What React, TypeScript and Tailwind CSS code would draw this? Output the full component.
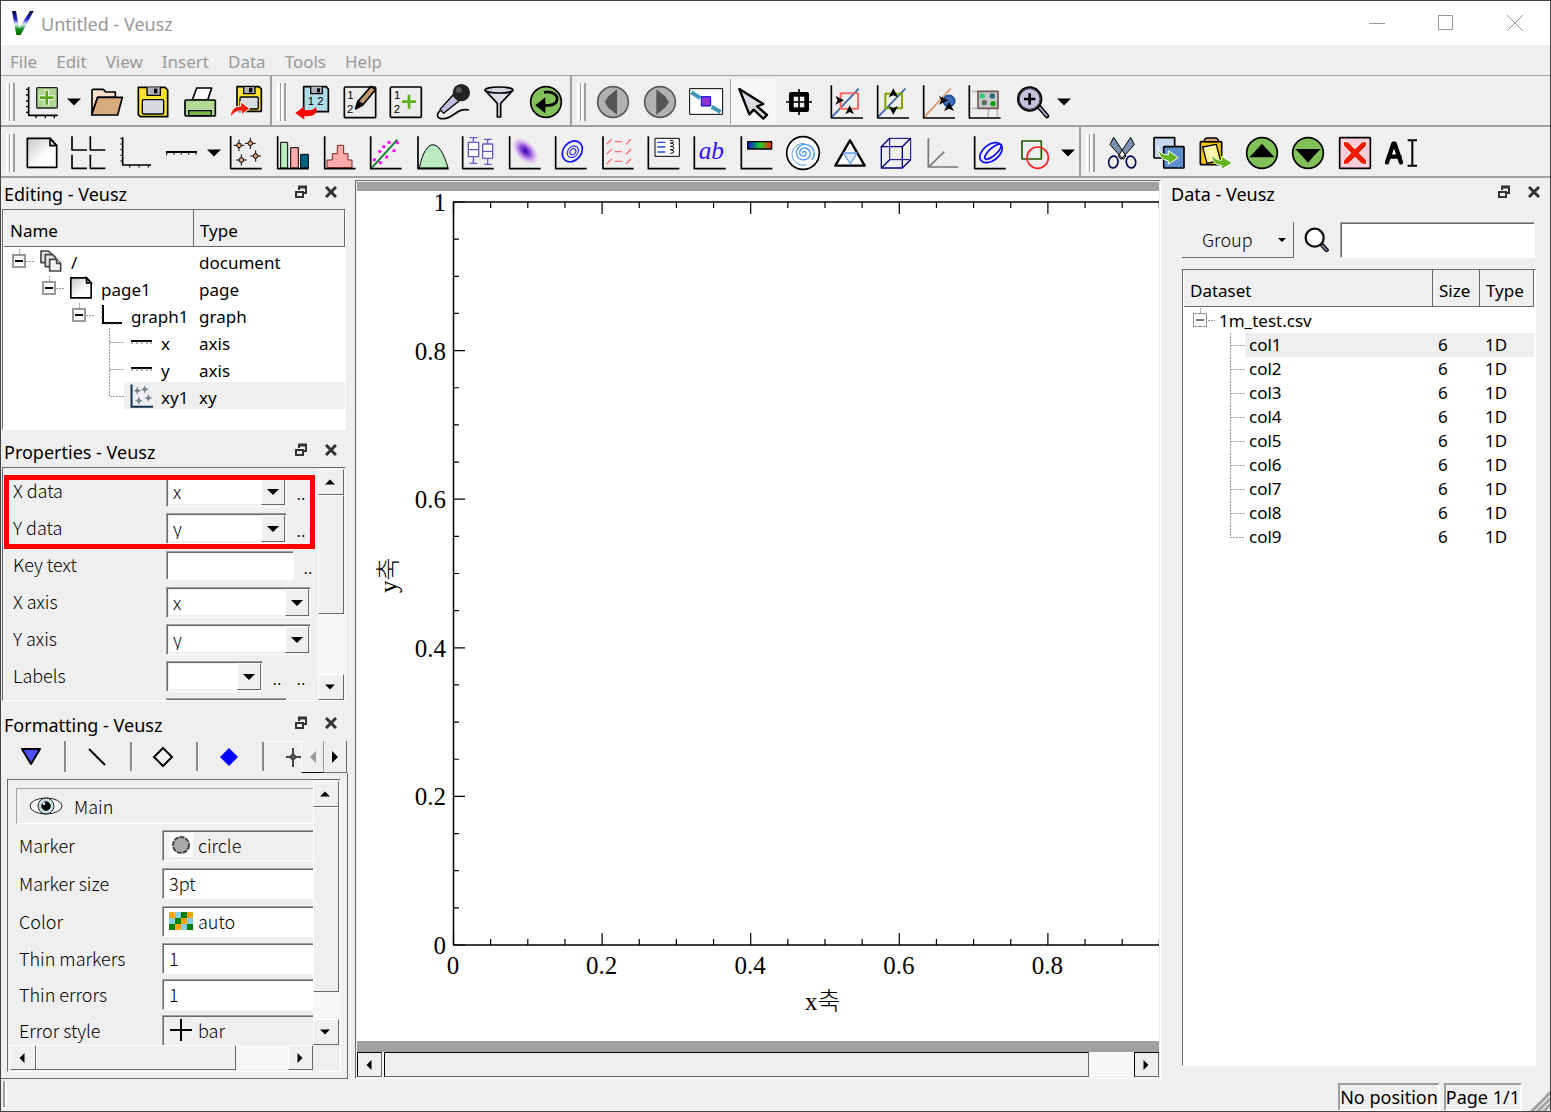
import React from 'react';

const ui = "font-['Noto_Sans','Noto_Sans_CJK_KR',sans-serif]";
const thin = "font-['Noto_Sans_CJK_KR',sans-serif] font-light";
const panel = 'border border-t-[#696969] border-l-[#696969] border-r-white border-b-white';
const field = 'border border-t-[#a0a0a0] border-l-[#a0a0a0] border-r-white border-b-white shadow-[inset_1px_1px_0_#696969]';
const raised = 'border border-t-white border-l-white border-r-[#696969] border-b-[#696969] bg-[#efefef]';
const trough = 'bg-[repeating-conic-gradient(#ffffff_0_25%,#efefef_0_50%)] bg-[length:2px_2px]';

/* ---------- toolbar icons ---------- */

function Icon({ box, children }: { box: string; children: React.ReactNode }) {
  return (
    <svg width="36" height="36" viewBox={`${box} 108 108`} fill="none" stroke="#000" strokeWidth="5" strokeLinejoin="round" aria-hidden="true">
      {children}
    </svg>
  );
}

function Digits({ x, y, children }: { x: number; y: number; children: string }) {
  return (
    <text x={x} y={y} fontSize="34" fill="#000" stroke="none" fontFamily="Liberation Sans, sans-serif">{children}</text>
  );
}

function Star({ x, y, fill = '#e8a078' }: { x: number; y: number; fill?: string }) {
  return (
    <g strokeWidth="3">
      <path d={`M${x} ${y - 17}v34M${x - 16} ${y}h32`} />
      <circle cx={x} cy={y} r="7" fill={fill} />
    </g>
  );
}

const fileIcons = {
  newGraph: (
    <Icon box="72 252">
      <path d="M86 261V346H173" />
      <path d="M78 268h8M78 285h8M78 303h8M78 320h8M78 337h8M108 346v9M136 346v9M163 346v9" strokeWidth="4" />
      <rect x="110" y="263" width="62" height="61" rx="3" fill="#b2d693" stroke="#222" strokeWidth="4" />
      <path d="M140 270v46M117 293h46" stroke="#fff" strokeWidth="13" />
      <path d="M140 272v42M119 293h42" stroke="#5ba91a" strokeWidth="8" />
    </Icon>
  ),
  open: (
    <Icon box="264 252">
      <path d="M273 345V272Q273 268 277 268H307L314 276H343V292H290L273 340Z" fill="#f5dfca" />
      <path d="M290 292H364L350 345H272Z" fill="#d8ab7c" />
    </Icon>
  ),
  save: (
    <Icon box="405 252">
      <path d="M415 262H495L503 270V350H421L415 344Z" fill="#fde330" />
      <path d="M441 262V286H481V262" fill="#b0b3b8" strokeWidth="4" />
      <rect x="462" y="266" width="10" height="14" fill="#000" stroke="none" />
      <rect x="427" y="299" width="64" height="43" rx="4" fill="#d5dbe0" strokeWidth="4" />
    </Icon>
  ),
  print: (
    <Icon box="543 252">
      <path d="M587 264H632L620 300H574Z" fill="#fff" />
      <rect x="552" y="300" width="91" height="48" rx="3" fill="#b4d896" />
      <rect x="563" y="332" width="68" height="15" fill="#7ab648" strokeWidth="4" />
    </Icon>
  ),
  export: (
    <Icon box="684 252">
      <path d="M711 260H777L784 267V334H716L711 329Z" fill="#fde330" />
      <path d="M731 261V281H765V261" fill="#b0b3b8" strokeWidth="4" />
      <rect x="747" y="263" width="10" height="14" fill="#000" stroke="none" />
      <rect x="720" y="291" width="55" height="36" rx="4" fill="#d5dbe0" strokeWidth="4" />
      <path d="M690 354Q692 318 722 318V305L750 326L724 344V333Q705 331 690 354Z" fill="#f02010" stroke="#fff" strokeWidth="3" />
    </Icon>
  ),
};

const dataIcons = [
  ['Import data',
    <Icon box="75 24">
      <path d="M101 32H168L175 39V107H101Z" fill="#b0dcea" />
      <path d="M122 32V53H157V32" fill="#b0b3b8" strokeWidth="4" />
      <rect x="141" y="37" width="9" height="12" fill="#000" stroke="none" />
      <Digits x={113} y={87}>1</Digits>
      <Digits x={142} y={87}>2</Digits>
      <path d="M76 111L103 91V102Q130 106 138 92L140 106Q134 124 103 120V131Z" fill="#f00" stroke="none" />
    </Icon>],
  ['Edit data',
    <Icon box="216 24">
      <rect x="223" y="33" width="94" height="92" rx="3" fill="#ececec" />
      <Digits x={232} y={70}>1</Digits>
      <Digits x={231} y={112}>2</Digits>
      <path d="M257 98L264 76L303 31L316 41L279 86Z" fill="#c19a6b" />
      <path d="M257 98L264 76L279 86Z" fill="#000" />
    </Icon>],
  ['Create dataset',
    <Icon box="354 24">
      <rect x="361" y="33" width="93" height="91" rx="3" fill="#ececec" />
      <Digits x={372} y={70}>1</Digits>
      <Digits x={371} y={112}>2</Digits>
      <path d="M417 56v42M396 77h42" stroke="#5cb01c" strokeWidth="8" />
    </Icon>],
  ['Capture data',
    <Icon box="498 24">
      <path d="M552 57L570 75L524 112L513 100Z" fill="#c2bee0" strokeWidth="4" />
      <circle cx="577" cy="50" r="26" fill="#222" stroke="none" />
      <circle cx="570" cy="42" r="9" fill="#555" stroke="none" />
      <path d="M514 104C500 115 503 129 524 128C556 126 564 94 600 102" />
    </Icon>],
  ['Filter data',
    <Icon box="633 24">
      <path d="M646 44L682 82V123H692V82L728 44Z" fill="#dcdee4" />
      <ellipse cx="687" cy="42" rx="42" ry="9" fill="#d0d4dc" />
    </Icon>],
  ['Reload linked data',
    <Icon box="774 24">
      <circle cx="828" cy="78" r="46" fill="#82c05a" />
      <path d="M822 49C846 44 864 57 861 72C858 87 842 89 822 89" strokeWidth="8" />
      <path d="M796 88L826 64V112Z" fill="#000" stroke="none" />
    </Icon>],
] as [string, React.ReactNode][];

const viewIcons = [
  ['Previous page',
    <Icon box="75 24">
      <circle cx="129" cy="78" r="46" fill="#b1b1b1" stroke="#5a5a5a" />
      <path d="M104 78L115 61L141 40V116L115 95Z" fill="#555" stroke="none" />
    </Icon>],
  ['Next page',
    <Icon box="216 24">
      <circle cx="270" cy="78" r="46" fill="#b1b1b1" stroke="#5a5a5a" />
      <path d="M297 78L285 61L259 40V116L285 95Z" fill="#555" stroke="none" />
    </Icon>],
  ['Full screen',
    <Icon box="354 24">
      <rect x="359" y="38" width="99" height="77" fill="#fff" strokeWidth="3" />
      <path d="M364 49L391 66M425 92L452 108" stroke="#3a98b2" strokeWidth="12" />
      <rect x="394" y="62" width="28" height="28" fill="#9030d8" stroke="#0000e0" strokeWidth="3" />
    </Icon>],
  ['Select items',
    <Icon box="498 24">
      <path d="M511 39L583 84L564 91L594 117L583 128L554 101L541 115Z" fill="#dcdce0" strokeWidth="7" />
    </Icon>],
  ['Read data points',
    <Icon box="633 24">
      <rect x="657" y="48" width="60" height="60" rx="6" fill="#000" stroke="none" />
      <rect x="671" y="62" width="32" height="32" fill="#efefef" stroke="none" />
      <path d="M687 39v78M648 78h78" />
    </Icon>],
  ['Zoom axes',
    <Icon box="81 24">
      <path d="M94 122L173 38" stroke="#3465a4" />
      <rect x="119" y="52" width="52" height="46" stroke="#ff6a6a" strokeWidth="6" />
      <path d="M91 28V126H186" />
      <path d="M103 60L129 73L103 86L110 73ZM133 115L146 88L159 115L146 108Z" fill="#000" stroke="none" />
    </Icon>],
  ['Recenter axes',
    <Icon box="219 24">
      <path d="M232 122L313 38" stroke="#3465a4" />
      <rect x="253" y="53" width="50" height="44" stroke="#80a800" strokeWidth="6" />
      <path d="M230 28V126H324" />
      <path d="M263 64L277 37L291 64L277 58ZM263 90L277 116L291 90L277 96Z" fill="#000" stroke="none" />
    </Icon>],
  ['Reset axes',
    <Icon box="363 24">
      <path d="M374 122L452 38" stroke="#dd9468" />
      <circle cx="447" cy="75" r="17" fill="#3a6cb5" stroke="#1f4e98" />
      <path d="M371 28V126H465" />
      <path d="M417 60L444 73L417 86L424 73ZM432 105L447 78L462 105L447 98Z" fill="#000" stroke="none" />
    </Icon>],
  ['Zoom page',
    <Icon box="501 24">
      <path d="M515 46H535M515 97H535M565 98V124M592 98V124" stroke="#bbb" />
      <rect x="534" y="46" width="60" height="51" fill="#c8c8c8" stroke="#6f5558" />
      <g stroke="none">
        <circle cx="547" cy="60" r="8" fill="#2ecc71" />
        <circle cx="577" cy="60" r="8" fill="#2a6a7a" />
        <circle cx="553" cy="80" r="8" fill="#5a6a55" />
        <circle cx="579" cy="83" r="8" fill="#10a010" />
      </g>
      <path d="M508 28V126H602" />
    </Icon>],
  ['Zoom',
    <Icon box="639 24">
      <path d="M714 92L738 120" strokeWidth="14" strokeLinecap="round" />
      <path d="M716 95L737 119" stroke="#a8a4cc" strokeWidth="6" strokeLinecap="round" />
      <circle cx="686" cy="69" r="34" fill="#c5c2de" strokeWidth="8" />
      <circle cx="686" cy="69" r="32" stroke="#77748c" strokeWidth="2" />
      <path d="M686 52v34M669 69h34" strokeWidth="8" />
    </Icon>],
] as [string, React.ReactNode][];

function PageShape() {
  return (
    <>
      <defs>
        <linearGradient id="paper" x1="0" y1="0" x2="1" y2="1">
          <stop offset="0" stopColor="#c4c4c4" />
          <stop offset="0.6" stopColor="#fff" />
        </linearGradient>
      </defs>
      <path d="M82 415H150L170 437V502H82Z" fill="url(#paper)" />
      <path d="M150 415V437H170Z" fill="#ddd" />
    </>
  );
}

const insertIcons = [
  ['Page', <Icon box="72 405"><PageShape /></Icon>],
  ['Grid',
    <Icon box="210 405">
      <path d="M216 409V450H261M271 409V450H316M216 464V505H261M271 464V505H316" />
    </Icon>],
  ['Graph',
    <Icon box="351 405">
      <path d="M368 412V495H453" />
      <path d="M361 415h7M361 432h7M361 449h7M361 466h7M361 483h7M389 495v8M417 495v8M445 495v8" strokeWidth="3" />
    </Icon>],
  ['Axis',
    <Icon box="489 405">
      <path d="M498 456H591" strokeWidth="6" />
      <path d="M500 456v10M522 456v8M544 456v8M566 456v8M588 456v8" strokeWidth="3" />
    </Icon>],
] as [string, React.ReactNode][];

const plotIcons = [
  ['Plot points',
    <Icon box="684 405">
      <Star x={717} y={436} /><Star x={751} y={430} /><Star x={724} y={480} /><Star x={767} y={468} />
      <path d="M692 408V506H785" />
    </Icon>],
  ['Plot bar charts',
    <Icon box="12 177">
      <g strokeWidth="3">
        <rect x="29" y="199" width="21" height="77" fill="#bbebc0" />
        <rect x="59" y="215" width="23" height="61" fill="#ffaaaa" />
        <rect x="89" y="235" width="23" height="41" fill="#006080" />
      </g>
      <path d="M20 181V278H113" />
    </Icon>],
  ['Plot histogram',
    <Icon box="150 177">
      <path d="M168 275V252H184V233H199V208H218V233H231V252H243V275Z" fill="#ffaaaa" stroke="#7a2020" strokeWidth="3" />
      <path d="M161 181V278H254" />
    </Icon>],
  ['Fit function',
    <Icon box="288 177">
      <path d="M303 275L379 191" stroke="#188038" strokeWidth="6" />
      <g fill="#f0f" stroke="none">
        <circle cx="310" cy="251" r="5" /><circle cx="328" cy="260" r="5" /><circle cx="326" cy="226" r="5" />
        <circle cx="338" cy="212" r="5" /><circle cx="354" cy="199" r="5" /><circle cx="347" cy="243" r="5" />
        <circle cx="369" cy="224" r="5" /><circle cx="379" cy="200" r="5" />
      </g>
      <path d="M299 181V278H392" />
    </Icon>],
  ['Plot function',
    <Icon box="429 177">
      <path d="M445 276C464 183 506 183 531 276Z" fill="#bbebc0" strokeWidth="3" />
      <path d="M441 181V278H533" />
    </Icon>],
  ['Plot box plots',
    <Icon box="570 177">
      <g stroke="#6a5acd" strokeWidth="4">
        <rect x="595" y="199" width="31" height="43" fill="#fff" />
        <rect x="638" y="204" width="30" height="43" fill="#fff" />
        <path d="M595 221h31M638 226h30M610 199V185M599 185h23M610 242v20M599 262h23M653 204V190M642 190h23M653 247v18M642 265h23" />
      </g>
      <path d="M578 181V278H671" />
    </Icon>],
  ['Plot image',
    <Icon box="711 177">
      <defs>
        <radialGradient id="blob">
          <stop offset="0" stopColor="#3000b0" />
          <stop offset="0.45" stopColor="#9a5ae0" />
          <stop offset="1" stopColor="#e8b8f4" stopOpacity="0.3" />
        </radialGradient>
      </defs>
      <ellipse cx="766" cy="225" rx="46" ry="27" transform="rotate(46 766 225)" fill="url(#blob)" stroke="none" />
      <path d="M719 181V278H812" />
    </Icon>],
  ['Plot contours',
    <Icon box="849 177">
      <g stroke="#1010ff" strokeWidth="5" transform="rotate(-50 907 226)">
        <ellipse cx="907" cy="226" rx="34" ry="27" />
        <ellipse cx="907" cy="228" rx="19" ry="15" strokeWidth="3" />
        <ellipse cx="907" cy="228" rx="10" ry="8" strokeWidth="3" />
      </g>
      <path d="M857 181V278H950" />
    </Icon>],
  ['Plot vector field',
    <Icon box="987 177">
      <g stroke="#ff7070" strokeWidth="4">
        <path d="M1010 205L1025 190M1034 197H1056M1068 205L1083 190" />
        <path d="M1010 235L1025 220M1034 227H1056M1068 235L1083 220" />
        <path d="M1010 264L1025 249M1034 256H1056M1068 264L1083 249" />
      </g>
      <path d="M999 181V278H1091" />
    </Icon>],
  ['Key',
    <Icon box="228 177">
      <rect x="255" y="187" width="73" height="54" fill="#fff" strokeWidth="3" />
      <path d="M262 199h24M262 213h24M262 228h24" stroke="#1a4fe0" strokeWidth="4" />
      <path d="M300 194q10-4 10 3t-9 4q10 0 10 6t-10 4q10 0 10 6t-10 4q10 0 10 6t-10 5" strokeWidth="3" />
      <path d="M235 181V278H328" />
    </Icon>],
  ['Label',
    <Icon box="369 177">
      <text x="389" y="248" fontSize="76" fontStyle="italic" fill="#3311ff" stroke="none" fontFamily="Liberation Serif, serif">ab</text>
      <path d="M376 181V278H470" />
    </Icon>],
  ['Color bar',
    <Icon box="507 177">
      <defs>
        <linearGradient id="rainbow">
          <stop offset="0" stopColor="#1010e0" />
          <stop offset="0.5" stopColor="#10d030" />
          <stop offset="0.75" stopColor="#908010" />
          <stop offset="1" stopColor="#ff1010" />
        </linearGradient>
      </defs>
      <rect x="533" y="197" width="72" height="22" fill="url(#rainbow)" strokeWidth="4" />
      <path d="M514 181V278H607" />
    </Icon>],
  ['Polar graph',
    <Icon box="648 177">
      <circle cx="702" cy="231" r="49" fill="#fff" />
      <path d="M702 232c-4-6 6-9 9-2c3 9-9 14-16 7c-8-10 2-23 14-21c15 3 19 20 10 29c-12 12-32 7-36-9c-4-20 13-34 31-30c22 6 28 31 14 45" stroke="#4f9cf0" strokeWidth="4" />
      <path d="M713 266c-22 6-43-8-44-30c0-20 18-36 38-33" stroke="#4f9cf0" strokeWidth="3" />
    </Icon>],
  ['Ternary graph',
    <Icon box="783 177">
      <path d="M837 193L881 269H793Z" fill="#fff" strokeWidth="7" />
      <path d="M817 231H858L838 264Z" fill="#dbe7ff" stroke="#6a9af4" strokeWidth="4" />
    </Icon>],
  ['3D scene',
    <Icon box="237 177">
      <g stroke="#000080" strokeWidth="4">
        <rect x="247" y="212" width="63" height="64" />
        <rect x="272" y="187" width="63" height="64" strokeWidth="3" />
        <path d="M247 212L272 187M310 212L335 187M310 276L335 251M247 276L272 251" />
      </g>
    </Icon>],
  ['3D graph',
    <Icon box="372 177">
      <path d="M385 187V273H475M386 273L433 227" stroke="#777" />
    </Icon>],
  ['Covariance ellipse',
    <Icon box="513 177">
      <g stroke="#0a0aff">
        <ellipse cx="573" cy="230" rx="38" ry="24" transform="rotate(-38 573 230)" />
        <ellipse cx="579" cy="227" rx="32" ry="11" transform="rotate(-42 579 227)" />
      </g>
      <path d="M524 181V278H617" />
    </Icon>],
  ['Shape',
    <Icon box="651 177">
      <rect x="666" y="195" width="58" height="54" stroke="#1c5a00" />
      <circle cx="713" cy="245" r="32" stroke="#ff2020" />
    </Icon>],
] as [string, React.ReactNode][];

const editIcons = [
  ['Cut',
    <Icon box="102 177">
      <path d="M131 184L120 206L160 250L168 240ZM182 184L193 206L153 250L145 240Z" fill="#7c90b0" strokeWidth="3" />
      <ellipse cx="130" cy="258" rx="14" ry="18" transform="rotate(12 130 258)" stroke="#000c58" />
      <ellipse cx="183" cy="258" rx="14" ry="18" transform="rotate(-12 183 258)" stroke="#000c58" />
    </Icon>],
  ['Copy',
    <Icon box="240 177">
      <rect x="249" y="185" width="62" height="61" rx="2" fill="#c4d6ee" />
      <rect x="278" y="212" width="61" height="64" rx="2" fill="#5c8fd0" />
      <path d="M260 212Q264 236 292 237V224L322 245L292 265V254Q262 252 260 212Z" fill="#62b51c" stroke="#fff" strokeWidth="3" />
    </Icon>],
  ['Paste',
    <Icon box="378 177">
      <rect x="388" y="197" width="64" height="69" rx="3" fill="#f5c800" />
      <path d="M400 197Q400 186 410 186H432Q442 186 442 197Z" fill="#d8a878" strokeWidth="4" />
      <path d="M395 213L436 205L448 252L408 262Z" fill="#fff7a0" strokeWidth="4" />
      <path d="M420 226Q424 252 452 253V241L484 261L452 280V269Q420 266 420 226Z" fill="#62b51c" stroke="#fff" strokeWidth="3" />
    </Icon>],
  ['Move up',
    <Icon box="519 177">
      <circle cx="573" cy="231" r="46" fill="#82c05a" />
      <path d="M535 244L556 222L573 203L590 222L611 244Z" fill="#000" stroke="none" />
    </Icon>],
  ['Move down',
    <Icon box="660 177">
      <circle cx="714" cy="231" r="46" fill="#82c05a" />
      <path d="M676 219L697 241L714 260L731 241L752 219Z" fill="#000" stroke="none" />
    </Icon>],
  ['Delete',
    <Icon box="798 177">
      <rect x="806" y="185" width="92" height="92" rx="2" fill="#f8ccd8" />
      <path d="M816 196L832 198L852 218L872 198L888 196L886 210L865 231L886 252L888 266L872 264L852 244L832 264L816 266L818 252L839 231L818 210Z" fill="#f01c00" stroke="#fff" strokeWidth="3" />
    </Icon>],
  ['Rename',
    <Icon box="939 177">
      <path d="M951 259L970 203H974L993 259M957 242H989" strokeWidth="13" strokeLinecap="round" />
      <path d="M1013 193H1041M1013 269H1041M1027 193V269" strokeWidth="6" />
    </Icon>],
] as [string, React.ReactNode][];

/* ---------- small shared pieces ---------- */

function Triangle({ dir, size = 12, color = '#000' }: { dir: 'up' | 'down' | 'left' | 'right'; size?: number; color?: string }) {
  const paths = {
    up: 'M0 9L6 3L12 9Z',
    down: 'M0 3L6 9L12 3Z',
    left: 'M9 0L3 6L9 12Z',
    right: 'M3 0L9 6L3 12Z',
  };
  return (
    <svg width={size} height={size} viewBox="0 0 12 12" className="shrink-0" aria-hidden="true">
      <path d={paths[dir]} fill={color} />
    </svg>
  );
}

function ToolButton({ label, pressed, children }: { label: string; pressed?: boolean; children: React.ReactNode }) {
  return (
    <button
      type="button"
      aria-label={label}
      className={`flex h-[45px] w-[46px] shrink-0 items-center justify-center ${pressed ? `border-l border-[#a0a0a0] ${trough}` : ''}`}
    >
      {children}
    </button>
  );
}

function MenuArrow({ label }: { label: string }) {
  return (
    <button type="button" aria-label={label} className="flex w-[18px] shrink-0 items-center justify-center self-stretch">
      <Triangle dir="down" size={14} />
    </button>
  );
}

function ToolGroup({ className, children }: { className: string; children: React.ReactNode }) {
  return (
    <div role="toolbar" className={`flex h-full shrink-0 items-center pt-[2px] pl-[5px] ${className}`}>
      <div className="mr-1 flex h-[38px] shrink-0">
        <div className="w-1 border-l-2 border-r border-l-white border-r-[#a0a0a0]" />
        <div className="w-[5px] border-l-2 border-r-2 border-l-white border-r-[#a0a0a0]" />
      </div>
      <div className="flex h-full flex-1 items-center justify-between">{children}</div>
    </div>
  );
}

function DockTitle({ pad = 'pr-[11px]', children }: { pad?: string; children: React.ReactNode }) {
  return (
    <div className={`flex h-[31px] shrink-0 items-center justify-between pl-[3px] ${pad}`}>
      <h2 className="pt-px text-[18px] leading-6">{children}</h2>
      <div className="flex items-center gap-[17px] pb-1">
        <button type="button" aria-label="Float">
          <svg width="14" height="14" viewBox="0 0 14 14" fill="none" stroke="#333" strokeWidth="2" aria-hidden="true">
            <path d="M5 5V2H12V8H10" />
            <path d="M4 2H13" strokeWidth="3" />
            <rect x="2" y="7" width="7" height="5" />
          </svg>
        </button>
        <button type="button" aria-label="Close">
          <svg width="12" height="12" viewBox="0 0 12 12" stroke="#333" strokeWidth="3" aria-hidden="true">
            <path d="M1 1L11 11M11 1L1 11" />
          </svg>
        </button>
      </div>
    </div>
  );
}

function ScrollButton({ dir, className }: { dir: 'up' | 'down' | 'left' | 'right'; className?: string }) {
  return (
    <button type="button" aria-label={`Scroll ${dir}`} className={`flex shrink-0 items-center justify-center pr-[2px] ${raised} ${className}`}>
      <Triangle dir={dir} size={10} />
    </button>
  );
}

function VScroll({ thumb }: { thumb: string }) {
  return (
    <div className={`flex w-[26px] shrink-0 flex-col ${trough}`}>
      <ScrollButton dir="up" className="h-[26px]" />
      <div className={`${raised} ${thumb}`} />
      <div className="flex-1" />
      <ScrollButton dir="down" className="h-[26px]" />
    </div>
  );
}

function Branch({ kind }: { kind: 'box' | 'leaf' | 'last' }) {
  return (
    <svg width="30" height="27" className="shrink-0" fill="none" stroke="#999" strokeDasharray="2 1" aria-hidden="true">
      {kind === 'box' ? (
        <>
          <path d="M15.500 2V7M22 14.500H30" />
          <rect x="9" y="8" width="12" height="12" stroke="#999" strokeWidth="2" strokeDasharray="none" />
          <path d="M11 14H19" stroke="#000" strokeWidth="2" strokeDasharray="none" />
        </>
      ) : (
        <path d={kind === 'last' ? 'M15.500 0V14.500H30' : 'M15.500 0V27M15.500 14.500H30'} />
      )}
    </svg>
  );
}

/* ---------- editing dock ---------- */

const treeIcons = {
  document: (
    <svg width="22" height="22" viewBox="0 0 66 66" fill="#e4e4e4" stroke="#444" strokeWidth="5" aria-hidden="true">
      <path d="M3 3H25L34 12V38H3Z" />
      <path d="M16 14H38L47 23V50H16Z" />
      <path d="M29 28H50L62 40V63H29Z" fill="#f4f4f4" />
      <path d="M50 28V40H62" />
    </svg>
  ),
  page: (
    <svg width="24" height="24" viewBox="74 407 104 104" fill="none" stroke="#000" strokeWidth="7" aria-hidden="true"><PageShape /></svg>
  ),
  graph: (
    <svg width="22" height="22" viewBox="0 0 22 22" fill="none" stroke="#000" strokeWidth="2" aria-hidden="true">
      <path d="M3 1V19H22" /><path d="M1 3h2M1 8h2M1 13h2M7 19v2M12 19v2M17 19v2" stroke="#666" strokeWidth="1" />
    </svg>
  ),
  axis: (
    <svg width="22" height="22" viewBox="0 0 22 22" fill="none" stroke="#000" strokeWidth="2" aria-hidden="true">
      <path d="M1 10H22" /><path d="M2 10v3M7 10v3M12 10v3M17 10v3M21 10v3" stroke="#666" strokeWidth="1" />
    </svg>
  ),
  xy: (
    <svg width="23" height="24" viewBox="684 403 104 108" fill="none" stroke="#44586e" strokeWidth="5" aria-hidden="true">
      <Star x={717} y={433} fill="#8090a0" /><Star x={751} y={427} fill="#8090a0" /><Star x={724} y={478} fill="#8090a0" /><Star x={767} y={466} fill="#8090a0" />
      <path d="M691 405V506H788" stroke="#10304f" strokeWidth="9" />
    </svg>
  ),
};

const treeRows: { depth: number; kind: 'box' | 'leaf' | 'last'; icon: keyof typeof treeIcons; name: string; type: string; selected?: boolean }[] = [
  { depth: 0, kind: 'box', icon: 'document', name: '/', type: 'document' },
  { depth: 1, kind: 'box', icon: 'page', name: 'page1', type: 'page' },
  { depth: 2, kind: 'box', icon: 'graph', name: 'graph1', type: 'graph' },
  { depth: 3, kind: 'leaf', icon: 'axis', name: 'x', type: 'axis' },
  { depth: 3, kind: 'leaf', icon: 'axis', name: 'y', type: 'axis' },
  { depth: 3, kind: 'last', icon: 'xy', name: 'xy1', type: 'xy', selected: true },
];

const indents = ['w-0', 'w-[30px]', 'w-[60px]', 'w-[90px]'];
const headCell = 'border-r border-b border-[#696969] pt-[5px] pl-[6px] font-normal';

function EditingDock() {
  return (
    <section className="shrink-0">
      <DockTitle>Editing - Veusz</DockTitle>
      <div className={`mr-[2px] ml-px h-[221px] bg-white pl-px ${panel}`}>
        <table className="w-full table-fixed border-separate border-spacing-0 text-left text-[17px]">
          <thead>
            <tr className="h-[37px] bg-[#efefef]">
              <th className={`w-[190px] ${headCell}`}>Name</th>
              <th className={headCell}>Type</th>
            </tr>
          </thead>
          <tbody>
            {treeRows.map((row) => (
              <tr key={row.name} className="h-[27px]">
                <td className="p-0">
                  <div className="flex h-[27px] items-center">
                    <div className={`shrink-0 ${indents[row.depth]}`} />
                    <Branch kind={row.kind} />
                    <div className={`flex h-full flex-1 items-center ${row.selected ? 'bg-[#efefef]' : ''}`}>
                      <div className="flex w-[34px] shrink-0 justify-center">{treeIcons[row.icon]}</div>
                      <span className="pt-[5px] pl-[3px] leading-5">{row.name}</span>
                    </div>
                  </div>
                </td>
                <td className={`p-0 pt-[5px] pl-[5px] leading-5 ${row.selected ? 'bg-[#efefef]' : ''}`}>{row.type}</td>
              </tr>
            ))}
          </tbody>
        </table>
      </div>
    </section>
  );
}

/* ---------- properties dock ---------- */

function Combo({ id, value, className }: { id: string; value: string; className: string }) {
  return (
    <div className={`relative h-[31px] p-[2px] ${field} ${className}`}>
      <select id={id} defaultValue={value} className="block h-full w-full appearance-none bg-white pb-[2px] pl-1 leading-6 outline-none">
        <option value={value}>{value}</option>
      </select>
      <div className={`pointer-events-none absolute top-px right-px bottom-px flex w-6 items-center justify-center ${raised}`}>
        <Triangle dir="down" />
      </div>
    </div>
  );
}

function Dots() {
  return <button type="button" className="w-[18px] shrink-0 text-center leading-5">..</button>;
}

const properties = [
  { id: 'x-data', label: 'X data', value: 'x', width: 'w-[121px]', dots: 1 },
  { id: 'y-data', label: 'Y data', value: 'y', width: 'w-[121px]', dots: 1 },
  { id: 'key-text', label: 'Key text', value: null, width: 'w-[128px]', dots: 1 },
  { id: 'x-axis', label: 'X axis', value: 'x', width: 'w-[145px]', dots: 0 },
  { id: 'y-axis', label: 'Y axis', value: 'y', width: 'w-[145px]', dots: 0 },
  { id: 'labels', label: 'Labels', value: '', width: 'w-[97px]', dots: 2 },
  { id: 'scale', label: '', value: '', width: 'w-[121px]', dots: 0 },
];

function PropertiesDock() {
  return (
    <section className="mt-[6px] shrink-0">
      <DockTitle>Properties - Veusz</DockTitle>
      <div className={`relative mr-[2px] ml-px flex h-[234px] overflow-hidden pt-px pr-px pl-px ${panel}`}>
        <div className={`flex-1 overflow-hidden pt-1 pl-[9px] text-[18px] ${thin}`}>
          {properties.map((p) => (
            <div key={p.id} className="flex h-[37px] items-center">
              <label htmlFor={p.id} className="w-[153px] shrink-0 pb-[3px] leading-6">{p.label}</label>
              {p.value === null ? (
                <input id={p.id} type="text" className={`h-[29px] bg-white px-1 outline-none ${field} ${p.width}`} />
              ) : (
                <Combo id={p.id} value={p.value} className={p.width} />
              )}
              <div className="flex gap-[6px] pl-[5px]">
                {p.dots > 0 && <Dots />}
                {p.dots > 1 && <Dots />}
              </div>
            </div>
          ))}
        </div>
        <VScroll thumb="h-[119px]" />
        <div className="pointer-events-none absolute top-[7px] left-px h-[74px] w-[311px] border-[5px] border-[#ff0000]" />
      </div>
    </section>
  );
}

/* ---------- formatting dock ---------- */

const tabs = [
  ['Main',
    <path d="M3 5H21L12 20Z" fill="#5050ff" stroke="#000" strokeWidth="2" strokeLinejoin="round" />],
  ['Plot line', <path d="M4 4L20 20" stroke="#000" strokeWidth="2" />],
  ['Marker border', <path d="M12 3L21 12L12 21L3 12Z" fill="none" stroke="#000" strokeWidth="2" />],
  ['Marker fill', <path d="M12 3L21 12L12 21L3 12Z" fill="#0000ff" />],
] as [string, React.ReactNode][];

const swatch = ['#ffa500', '#87ceeb', '#008000', '#ffa500', '#87ceeb', '#008000', '#ffa500', '#87ceeb', '#008000', '#ffa500', '#87ceeb', '#008000'];

const fieldIcons = {
  circle: (
    <svg width="24" height="24" className="shrink-0 bg-white" aria-hidden="true">
      <circle cx="12" cy="12" r="8" fill="#a8a8a8" stroke="#444" strokeWidth="2" strokeDasharray="5 1" />
    </svg>
  ),
  auto: (
    <svg width="24" height="18" shapeRendering="crispEdges" className="shrink-0" aria-hidden="true">
      {swatch.map((c, i) => (
        <rect key={i} x={(i % 4) * 6} y={Math.floor(i / 4) * 6} width="6" height="6" fill={c} />
      ))}
    </svg>
  ),
  bar: (
    <svg width="24" height="24" stroke="#000" strokeWidth="2" className="shrink-0" aria-hidden="true"><path d="M1 12H23M12 1V23" /></svg>
  ),
};

const formatting: { id: string; label: string; value: string; row: string; icon?: keyof typeof fieldIcons; bg: string }[] = [
  { id: 'marker', label: 'Marker', value: 'circle', row: 'h-[38px]', icon: 'circle', bg: 'bg-[#efefef]' },
  { id: 'marker-size', label: 'Marker size', value: '3pt', row: 'h-[38px]', bg: 'bg-white' },
  { id: 'color', label: 'Color', value: 'auto', row: 'h-[38px]', icon: 'auto', bg: 'bg-white' },
  { id: 'thin-markers', label: 'Thin markers', value: '1', row: 'h-[36px]', bg: 'bg-white' },
  { id: 'thin-errors', label: 'Thin errors', value: '1', row: 'h-[36px]', bg: 'bg-white' },
  { id: 'error-style', label: 'Error style', value: 'bar', row: 'h-[36px]', icon: 'bar', bg: 'bg-[#efefef]' },
];

function FormattingDock() {
  return (
    <section className="mt-2 flex min-h-0 flex-1 flex-col">
      <DockTitle>Formatting - Veusz</DockTitle>
      <div role="tablist" className="mt-px flex h-8 shrink-0">
        {tabs.map(([label, shape], i) => (
          <button
            key={label}
            role="tab"
            type="button"
            aria-label={label}
            aria-selected={i === 0}
            className={`flex shrink-0 items-start justify-center border-r-2 border-[#8a8a8a] pt-[3px] pr-1 ${i === 0 ? 'h-[31px] w-[65px]' : 'mt-px h-[29px] w-[66px] border-l border-l-white'}`}
          >
            <svg width="24" height="24" viewBox="0 0 24 24" aria-hidden="true">{shape}</svg>
          </button>
        ))}
        <button role="tab" type="button" aria-label="Error bar line" aria-selected={false} className="flex flex-1 items-start justify-end overflow-hidden border-t border-white pt-[3px]">
          <svg width="16" height="24" viewBox="0 0 16 24" stroke="#444" strokeWidth="2" aria-hidden="true">
            <path d="M1 12H16M8 3V22" /><circle cx="8" cy="12" r="2" fill="#777" />
          </svg>
        </button>
        <button type="button" aria-label="Scroll tabs left" className="flex w-[22px] shrink-0 items-center justify-center border-b border-l border-b-black border-l-white">
          <Triangle dir="left" color="#999" />
        </button>
        <button type="button" aria-label="Scroll tabs right" className="mr-px flex w-6 shrink-0 items-center justify-center border-r border-b border-l border-r-[#696969] border-b-[#696969] border-l-[#999]">
          <Triangle dir="right" />
        </button>
      </div>
      <div className="flex min-h-0 flex-1 flex-col border-r border-b border-[#696969] p-[6px]">
        <div className={`flex min-h-0 flex-1 flex-col p-px pl-[2px] ${panel}`}>
          <div className="flex min-h-0 flex-1">
            <div className={`min-w-0 flex-1 overflow-hidden pt-[7px] pl-[6px] text-[18px] ${thin}`}>
              <button type="button" className="mb-[2px] flex h-[36px] w-full items-center gap-[11px] border border-r-0 border-t-[#a0a0a0] border-b-white border-l-[#a0a0a0] pl-3 leading-6">
                <svg width="34" height="18" viewBox="0 0 102 54" stroke="#222" strokeWidth="3" aria-hidden="true">
                  <ellipse cx="51" cy="27" rx="48" ry="24" fill="#fff" />
                  <circle cx="51" cy="27" r="24" fill="#c8dde6" />
                  <circle cx="51" cy="27" r="13" fill="#000" />
                  <circle cx="45" cy="20" r="4" fill="#fff" stroke="none" />
                </svg>
                Main
              </button>
              {formatting.map((f) => (
                <div key={f.id} className={`flex items-center pl-[3px] ${f.row}`}>
                  <label htmlFor={f.id} className="w-[143px] shrink-0 leading-6">{f.label}</label>
                  <div className={`flex h-[31px] min-w-0 flex-1 items-center border border-r-0 border-t-[#a0a0a0] border-b-white border-l-[#a0a0a0] pl-[6px] shadow-[inset_1px_1px_0_#696969] ${f.bg}`}>
                    {f.icon ? (
                      <>
                        {fieldIcons[f.icon]}
                        <select id={f.id} defaultValue={f.value} className="min-w-0 flex-1 appearance-none bg-transparent pl-[5px] leading-6 outline-none">
                          <option value={f.value}>{f.value}</option>
                        </select>
                      </>
                    ) : (
                      <input id={f.id} type="text" defaultValue={f.value} className="w-full bg-transparent leading-6 outline-none" />
                    )}
                  </div>
                </div>
              ))}
            </div>
            <VScroll thumb="h-[185px]" />
          </div>
          <div className="flex h-[25px] shrink-0 pr-[26px]">
            <div className={`flex w-full ${trough}`}>
              <ScrollButton dir="left" className="w-[26px]" />
              <div className={`w-[200px] ${raised}`} />
              <div className="flex-1" />
              <ScrollButton dir="right" className="w-[25px]" />
            </div>
          </div>
        </div>
      </div>
    </section>
  );
}

/* ---------- plot ---------- */

const plot = { left: 96, top: 11, bottom: 754, unit: 743 };
const labels = ['0', '0.2', '0.4', '0.6', '0.8', '1'];

function Plot() {
  const ticks = Array.from({ length: 21 }, (_, i) => i);
  const { left, top, bottom, unit } = plot;
  return (
    <svg width="100%" height="100%" className="block bg-white" role="img" aria-label="Graph">
      <g stroke="#000" strokeWidth="1.500" fill="none">
        <path d={`M${left} ${bottom}H2000M${left} ${top}H2000M${left + 0.5} ${top}V${bottom}`} />
        {ticks.map((i) => {
          const pos = (i * unit) / 20;
          const len = i % 4 === 0 ? 12 : 6;
          return (
            <path
              key={i}
              strokeWidth="1.200"
              d={`M${left + 0.5 + pos} ${bottom}v${-len}M${left + 0.5 + pos} ${top}v${len}M${left} ${bottom - pos}h${len}`}
            />
          );
        })}
      </g>
      <g fontFamily="Liberation Serif, serif" fontSize="25">
        {labels.map((t, i) => (
          <React.Fragment key={t}>
            {i < 5 && <text x={left + (i * unit) / 5} y={bottom + 29} textAnchor="middle">{t}</text>}
            <text x={left - 7} y={bottom + 9 - (i * unit) / 5} textAnchor="end">{t}</text>
          </React.Fragment>
        ))}
        <text x="448" y="819">x<tspan fontFamily="Noto Sans CJK KR, sans-serif" fontSize="25" fontWeight="300">축</tspan></text>
        <text transform="translate(40 402) rotate(-90)">y<tspan fontFamily="Noto Sans CJK KR, sans-serif" fontSize="25" fontWeight="300">축</tspan></text>
      </g>
    </svg>
  );
}

function PlotWindow() {
  return (
    <main className="mt-[2px] flex min-w-0 flex-1 flex-col border border-t-[#696969] border-r-white border-b-white border-l-[#696969] p-px">
      <div className="h-[9px] shrink-0 bg-[#a0a0a0]" />
      <div className="min-h-0 flex-1 overflow-hidden"><Plot /></div>
      <div className="h-[11px] shrink-0 bg-[#a0a0a0]" />
      <div className={`flex h-[25px] shrink-0 ${trough}`}>
        <ScrollButton dir="left" className="w-[25px] border-t-black! border-l-black!" />
        <div className="ml-[2px] flex-1 border border-t-black border-r-[#696969] border-b-[#696969] border-l-black bg-[#efefef]" />
        <div className="w-[45px]" />
        <ScrollButton dir="right" className="w-[25px] border-t-black! border-l-black!" />
      </div>
    </main>
  );
}

/* ---------- data dock ---------- */

const columns = ['col1', 'col2', 'col3', 'col4', 'col5', 'col6', 'col7', 'col8', 'col9'];

function DataDock() {
  return (
    <aside className="flex w-[389px] shrink-0 flex-col">
      <div className="pl-[7px]"><DockTitle pad="pr-[10px]">Data - Veusz</DockTitle></div>
      <div className="mt-[13px] flex h-9 shrink-0 items-center pr-[15px] pl-[21px]">
        <button type="button" className={`flex h-full w-[112px] items-center justify-between border-r border-b border-[#696969] pr-[7px] pl-5 text-[18px] ${thin}`}>
          Group
          <Triangle dir="down" size={8} />
        </button>
        <label htmlFor="filter" aria-label="Filter datasets" className="mx-[10px]">
          <svg width="26" height="26" viewBox="0 0 78 78" fill="none" stroke="#111" aria-hidden="true">
            <path d="M52 52L68 69" strokeWidth="13" strokeLinecap="round" />
            <path d="M55 56L68 69" stroke="#8884b0" strokeWidth="5" strokeLinecap="round" />
            <circle cx="32" cy="32" r="27" strokeWidth="7" fill="#fff" />
          </svg>
        </label>
        <input id="filter" type="text" className={`h-full min-w-0 flex-1 bg-white px-1 outline-none ${field}`} />
      </div>
      <div className={`mt-[11px] mr-[14px] mb-[13px] ml-[21px] flex-1 bg-white pr-px pl-px ${panel}`}>
        <table className="w-full table-fixed border-separate border-spacing-0 text-left text-[17px]">
          <thead>
            <tr className="h-[37px] bg-[#efefef]">
              <th className={headCell}>Dataset</th>
              <th className={`w-[47px] ${headCell}`}>Size</th>
              <th className={`w-[54px] ${headCell}`}>Type</th>
            </tr>
          </thead>
          <tbody>
            <tr className="h-[26px]">
              <td colSpan={3} className="p-0">
                <div className="flex h-[26px] items-center">
                  <svg width="30" height="25" className="ml-px shrink-0" fill="none" stroke="#999" aria-hidden="true">
                    <path d="M15.500 0V5M23 12.500H30" strokeDasharray="2 1" />
                    <rect x="8.500" y="5.500" width="13" height="13" />
                    <path d="M11 12H19" stroke="#000" strokeWidth="1" />
                  </svg>
                  <span className="pt-[2px] pl-1 leading-5">1m_test.csv</span>
                </div>
              </td>
            </tr>
            {columns.map((name, i) => (
              <tr key={name} className="h-6">
                <td className="p-0">
                  <div className="flex h-6 items-center pl-[46px]">
                    <svg width="15" height="24" className="shrink-0" fill="none" stroke="#999" strokeDasharray="2 1" aria-hidden="true">
                      <path d={i === columns.length - 1 ? 'M0.500 0V12.500H15' : 'M0.500 0V24M0.500 12.500H15'} />
                    </svg>
                    <span className={`flex-1 pl-1 leading-6 ${i === 0 ? 'bg-[#efefef]' : ''}`}>{name}</span>
                  </div>
                </td>
                <td className={`p-0 pl-[5px] leading-6 ${i === 0 ? 'bg-[#efefef]' : ''}`}>6</td>
                <td className={`p-0 pl-[5px] leading-6 ${i === 0 ? 'bg-[#efefef]' : ''}`}>1D</td>
              </tr>
            ))}
          </tbody>
        </table>
      </div>
    </aside>
  );
}

/* ---------- window ---------- */

function TitleBar() {
  return (
    <header className="flex h-[44px] shrink-0 items-center justify-between bg-white pr-[27px] pl-[9px] text-[#999]">
      <div className="flex items-center gap-[7px]">
        <svg width="24" height="26" viewBox="0 0 72 78" aria-hidden="true">
          <defs>
            <linearGradient id="logo" x1="0" y1="0" x2="0" y2="1">
              <stop offset="0" stopColor="#000030" />
              <stop offset="0.35" stopColor="#2828e0" />
              <stop offset="0.55" stopColor="#e0f0f0" />
              <stop offset="0.75" stopColor="#109020" />
              <stop offset="1" stopColor="#006000" />
            </linearGradient>
          </defs>
          <path d="M6 3H18L27 55L60 3H71L32 75H19Z" fill="url(#logo)" />
        </svg>
        <h1 className="pt-[2px] text-[18px]">Untitled - Veusz</h1>
      </div>
      <div className="flex items-center gap-[53px]">
        <button type="button" aria-label="Minimize"><svg width="16" height="16" stroke="#999" aria-hidden="true"><path d="M0 8.500H16" /></svg></button>
        <button type="button" aria-label="Maximize"><svg width="16" height="16" stroke="#999" fill="none" aria-hidden="true"><rect x="0.500" y="0.500" width="14" height="14" /></svg></button>
        <button type="button" aria-label="Close window"><svg width="16" height="16" stroke="#999" aria-hidden="true"><path d="M0 0L16 16M16 0L0 16" /></svg></button>
      </div>
    </header>
  );
}

export default function App() {
  return (
    <div className={`flex h-screen min-h-[900px] flex-col overflow-hidden border border-[#444] bg-[#efefef] text-black ${ui}`}>
      <TitleBar />
      <nav className="flex h-[31px] shrink-0 items-center gap-px border-b border-[#a0a0a0] text-[17px] text-[#999]">
        {['File', 'Edit', 'View', 'Insert', 'Data', 'Tools', 'Help'].map((m) => (
          <button key={m} type="button" className="px-[9px] pt-[3px]">{m}</button>
        ))}
      </nav>

      <div className="flex h-[51px] shrink-0 border-b-2 border-[#a0a0a0]">
        <ToolGroup className="w-[271px] border-r-2 border-[#a0a0a0] pr-px">
          <ToolButton label="New document">{fileIcons.newGraph}</ToolButton>
          <MenuArrow label="New document types" />
          <ToolButton label="Open">{fileIcons.open}</ToolButton>
          <ToolButton label="Save">{fileIcons.save}</ToolButton>
          <ToolButton label="Print">{fileIcons.print}</ToolButton>
          <ToolButton label="Export">{fileIcons.export}</ToolButton>
        </ToolGroup>
        <ToolGroup className="w-[300px] border-r-2 border-[#a0a0a0] pr-px">
          {dataIcons.map(([label, icon]) => <ToolButton key={label} label={label}>{icon}</ToolButton>)}
        </ToolGroup>
        <ToolGroup className="w-[501px]">
          {viewIcons.map(([label, icon]) => (
            <ToolButton key={label} label={label} pressed={label === 'Select items'}>{icon}</ToolButton>
          ))}
          <MenuArrow label="Zoom options" />
        </ToolGroup>
      </div>

      <div className="flex h-[51px] shrink-0 border-b-2 border-[#a0a0a0]">
        <ToolGroup className="w-[1080px] border-r-2 border-[#a0a0a0] pr-[2px]">
          {insertIcons.map(([label, icon]) => <ToolButton key={label} label={label}>{icon}</ToolButton>)}
          <MenuArrow label="Axis types" />
          {plotIcons.map(([label, icon]) => <ToolButton key={label} label={label}>{icon}</ToolButton>)}
          <MenuArrow label="Shape types" />
        </ToolGroup>
        <ToolGroup className="w-[343px]">
          {editIcons.map(([label, icon]) => <ToolButton key={label} label={label}>{icon}</ToolButton>)}
        </ToolGroup>
      </div>

      <div className="flex min-h-0 flex-1">
        <div className="mr-[7px] flex w-[347px] shrink-0 flex-col">
          <EditingDock />
          <PropertiesDock />
          <FormattingDock />
        </div>
        <PlotWindow />
        <DataDock />
      </div>

      <footer className="flex h-[32px] shrink-0 items-end justify-between text-[18px]">
        <div className="mb-1 ml-[2px] h-[26px] w-1 border-l-2 border-[#a0a0a0] bg-white" />
        <div className="flex items-end gap-1">
          <span className="border-2 border-t-[#a0a0a0] border-r-white border-b-white border-l-[#a0a0a0] leading-6">No position</span>
          <span className="border-2 border-t-[#a0a0a0] border-r-white border-b-white border-l-[#a0a0a0] leading-6">Page 1/1</span>
          <svg width="20" height="20" stroke="#a0a0a0" strokeWidth="3" className="ml-1" aria-hidden="true">
            <path d="M1 21L21 1M7 21L21 7M13 21L21 13" />
          </svg>
        </div>
      </footer>
    </div>
  );
}
